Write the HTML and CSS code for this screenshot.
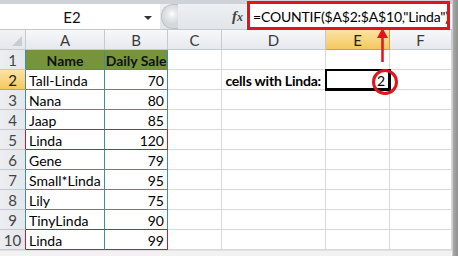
FILE: index.html
```html
<!DOCTYPE html>
<html>
<head>
<meta charset="utf-8">
<link rel="stylesheet" href="styles.css">
</head>
<body>
<div class="app">
  <div class="main">
    <div class="toolbar">
      <div class="namebox"><span class="nb-text">E2</span><span class="nb-arrow"></span></div>
      <div class="fbar-mid"><span class="grip"></span><span class="fx">f<span class="fx-x">x</span></span></div>
      <div class="formula"><span class="formula-text">=COUNTIF($A$2:$A$10,"Linda")</span></div>
    </div>
    <div class="sheet">
      <div class="hd corner"><span class="tri"></span></div>
      <div class="hd col">A</div>
      <div class="hd col">B</div>
      <div class="hd col">C</div>
      <div class="hd col">D</div>
      <div class="hd col sel">E</div>
      <div class="hd col">F</div>

      <div class="hd row">1</div>
      <div class="c tb head-fill ctr bold">Name</div>
      <div class="c tb head-fill ctr bold">Daily Sale</div>
      <div class="c"></div><div class="c"></div><div class="c"></div><div class="c"></div>

      <div class="hd row sel">2</div>
      <div class="c tb">Tall-Linda</div>
      <div class="c tb num">70</div>
      <div class="c"></div>
      <div class="c label bold"><span>cells with Linda:</span></div>
      <div class="c active num">2</div>
      <div class="c"></div>

      <div class="hd row">3</div>
      <div class="c tb">Nana</div>
      <div class="c tb num">80</div>
      <div class="c"></div><div class="c"></div><div class="c"></div><div class="c"></div>

      <div class="hd row">4</div>
      <div class="c tb red-below">Jaap</div>
      <div class="c tb num red-below">85</div>
      <div class="c"></div><div class="c"></div><div class="c"></div><div class="c"></div>

      <div class="hd row red-edge">5</div>
      <div class="c tb red-row">Linda</div>
      <div class="c tb num red-row red-right">120</div>
      <div class="c"></div><div class="c"></div><div class="c"></div><div class="c"></div>

      <div class="hd row">6</div>
      <div class="c tb">Gene</div>
      <div class="c tb num">79</div>
      <div class="c"></div><div class="c"></div><div class="c"></div><div class="c"></div>

      <div class="hd row">7</div>
      <div class="c tb">Small*Linda</div>
      <div class="c tb num">95</div>
      <div class="c"></div><div class="c"></div><div class="c"></div><div class="c"></div>

      <div class="hd row">8</div>
      <div class="c tb">Lily</div>
      <div class="c tb num">75</div>
      <div class="c"></div><div class="c"></div><div class="c"></div><div class="c"></div>

      <div class="hd row">9</div>
      <div class="c tb red-below">TinyLinda</div>
      <div class="c tb num red-below">90</div>
      <div class="c"></div><div class="c"></div><div class="c"></div><div class="c"></div>

      <div class="hd row red-edge">10</div>
      <div class="c tb red-row">Linda</div>
      <div class="c tb num red-row red-right">99</div>
      <div class="c"></div><div class="c"></div><div class="c"></div><div class="c"></div>
    </div>
  </div>
  <svg class="marks" width="458" height="256" viewBox="0 0 458 256">
    <rect x="248.5" y="2.5" width="200" height="26" fill="none" stroke="#e0141b" stroke-width="3"/>
    <line x1="382.5" y1="36" x2="382.5" y2="62" stroke="#e0141b" stroke-width="2.5"/>
    <polygon points="382.5,28 377,38 388,38" fill="#e0141b"/>
    <circle cx="385" cy="82" r="11.5" fill="none" stroke="#e0141b" stroke-width="3"/>
  </svg>
</div>
</body>
</html>
```
FILE: styles.css
```css
html, body {
  margin: 0;
  padding: 0;
}
body {
  width: 458px;
  height: 256px;
  overflow: hidden;
  background: #9a9a9a;
  font-family: Lato, "Liberation Sans", sans-serif;
}
.app {
  position: relative;
  width: 458px;
  height: 256px;
  background: linear-gradient(90deg, #f2f2f2 0, #f2f2f2 452px, #a8a8a8 453px, #8f8f8f 458px);
}
.main {
  width: 452px;
}
.toolbar {
  display: flex;
  height: 30px;
  box-sizing: border-box;
  padding-top: 4px;
  background: linear-gradient(#cfd3d9 0, #cfd3d9 4px, #dfe3e8 4px, #e4e7eb 100%);
  border-bottom: 1px solid #c4c8ce;
}
.namebox {
  flex: 0 0 160px;
  height: 25px;
  background: #fff;
  display: flex;
  align-items: center;
}
.nb-text {
  width: 144px;
  text-align: center;
  font-size: 15px;
  color: #111;
}
.nb-arrow {
  width: 0;
  height: 0;
  border-left: 4px solid transparent;
  border-right: 4px solid transparent;
  border-top: 4px solid #333;
  margin-top: 2px;
}
.fbar-mid {
  flex: 0 0 86px;
  height: 25px;
  display: flex;
  align-items: center;
  justify-content: space-between;
  background: linear-gradient(#eef0f3, #e2e5e9);
}
.grip {
  width: 16px;
  height: 23px;
  margin-left: 1px;
  border-radius: 12px 0 0 12px;
  background: radial-gradient(circle at 10px 9px, #ffffff 0, #e8eaed 4px, #d4d8dd 10px);
  border: 1px solid #bcc1c8;
  border-right: none;
}
.fx {
  font-family: "Liberation Serif", serif;
  font-style: italic;
  font-weight: bold;
  font-size: 15px;
  color: #444;
  margin-right: 3px;
}
.fx-x {
  font-size: 12px;
}
.formula {
  flex: 1 1 auto;
  min-width: 0;
  height: 25px;
  background: #fff;
  display: flex;
  align-items: center;
  padding-left: 7px;
  overflow: hidden;
  white-space: nowrap;
}
.formula-text {
  font-size: 14px;
  letter-spacing: -0.2px;
  color: #000;
}
.sheet {
  display: grid;
  grid-template-columns: 26px 79px 63px 54px 104px 64px 62px;
  grid-template-rows: repeat(11, 20px);
  background: #fff;
  border-bottom: 1px solid #e0e0e0;
}
.hd {
  box-sizing: border-box;
  background: linear-gradient(#f7f8fa, #e6e9ed);
  color: #3a3a3a;
  font-size: 15px;
  display: flex;
  align-items: center;
  justify-content: center;
  border-right: 1px solid #c6cad0;
  border-bottom: 1px solid #c6cad0;
}
.hd.row {
  background: linear-gradient(90deg, #eceef1, #e4e7eb);
  color: #444;
  border-right-color: #3f8ea3;
}
.hd.sel {
  background: linear-gradient(#fbe3a3, #f4c860);
  border-color: #c9a24a;
  color: #222;
}
.hd.row.sel {
  border-right-color: #3f8ea3;
}
.hd.row.red-edge {
  border-right-color: #d21a22;
}
.corner {
  position: relative;
  background: linear-gradient(#f2f3f5, #e4e7eb);
}
.tri {
  position: absolute;
  right: 3px;
  bottom: 3px;
  width: 0;
  height: 0;
  border-left: 10px solid transparent;
  border-bottom: 10px solid #c9ccd1;
}
.c {
  box-sizing: border-box;
  border-right: 1px solid #d9d9d9;
  border-bottom: 1px solid #d9d9d9;
  font-size: 14px;
  color: #000;
  display: flex;
  align-items: center;
  padding: 1px 3px 0 3px;
  white-space: nowrap;
  min-width: 0;
}
.tb {
  border-right-color: #3f8ea3;
  border-bottom-color: #3f8ea3;
}
.head-fill {
  background: #77933c;
  color: #121212;
}
.ctr {
  justify-content: center;
}
.bold {
  font-weight: bold;
}
.num {
  justify-content: flex-end;
}
.label {
  justify-content: flex-end;
  overflow: visible;
  padding-right: 4px;
  letter-spacing: -0.2px;
}
.red-below {
  border-bottom-color: #d21a22;
}
.red-row {
  border-bottom-color: #d21a22;
}
.red-right {
  border-right-color: #d21a22;
}
.active {
  position: relative;
  z-index: 1;
  box-shadow: 0 0 0 1px #000, inset 0 0 0 1px #000;
  border-color: #000;
  padding-right: 4px;
}
.marks {
  position: absolute;
  left: 0;
  top: 0;
  pointer-events: none;
  z-index: 2;
}
```
